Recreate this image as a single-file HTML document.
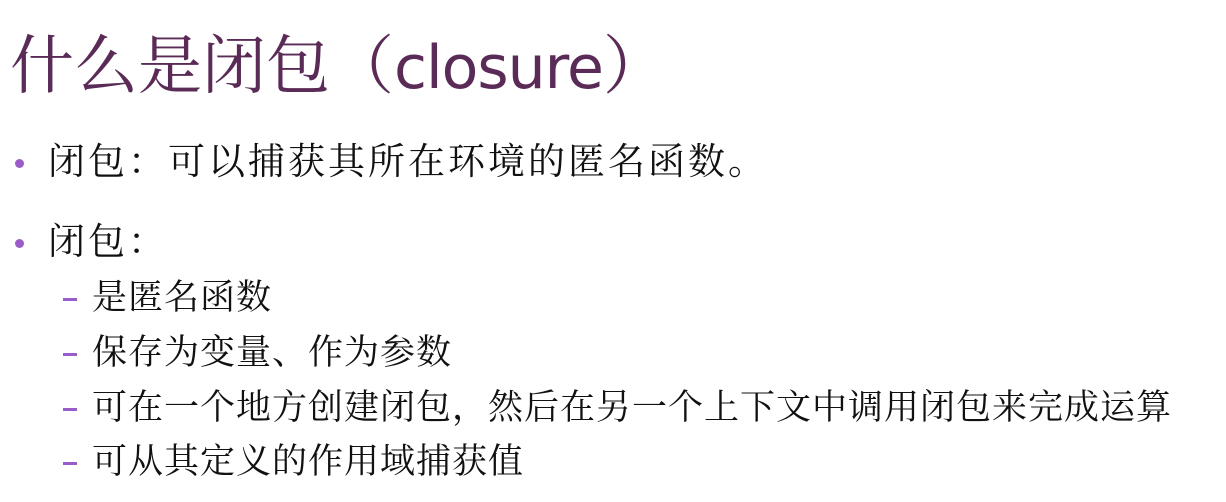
<!DOCTYPE html>
<html><head><meta charset="utf-8"><style>
body{margin:0;width:1226px;height:502px;background:#fff;overflow:hidden;position:relative;font-family:"Liberation Serif","Noto Serif CJK SC",serif;color:#111}
.t{position:absolute;left:10px;top:26px;font-size:64px;line-height:80px;color:#5b2b57;font-family:"Liberation Sans","Noto Serif CJK SC",sans-serif;white-space:nowrap}
.t .l{font-family:"DejaVu Sans","Liberation Sans",sans-serif;font-size:60px;letter-spacing:-1px}
.l1{position:absolute;left:48px;font-size:37px;letter-spacing:3px;line-height:46px;white-space:nowrap}
.dot{position:absolute;left:15px;width:9px;height:9px;border-radius:50%;background:#9a5cc8}
.s{position:absolute;left:92px;font-size:35px;letter-spacing:1px;line-height:44px;white-space:nowrap}
.d{position:absolute;left:63px;width:14px;height:3px;background:#9a5cc8}
</style></head><body>
<div class="t">什么是闭包（<span class="l">closure</span>）</div>
<div class="dot" style="top:159px"></div>
<div class="l1" style="top:140px">闭包：可以捕获其所在环境的匿名函数。</div>
<div class="dot" style="top:239px"></div>
<div class="l1" style="top:220px">闭包：</div>
<div class="d" style="top:298px"></div><div class="s" style="top:276px">是匿名函数</div>
<div class="d" style="top:353px"></div><div class="s" style="top:331px">保存为变量、作为参数</div>
<div class="d" style="top:408px"></div><div class="s" style="top:386px">可在一个地方创建闭包，然后在另一个上下文中调用闭包来完成运算</div>
<div class="d" style="top:462px"></div><div class="s" style="top:440px">可从其定义的作用域捕获值</div>
</body></html>
